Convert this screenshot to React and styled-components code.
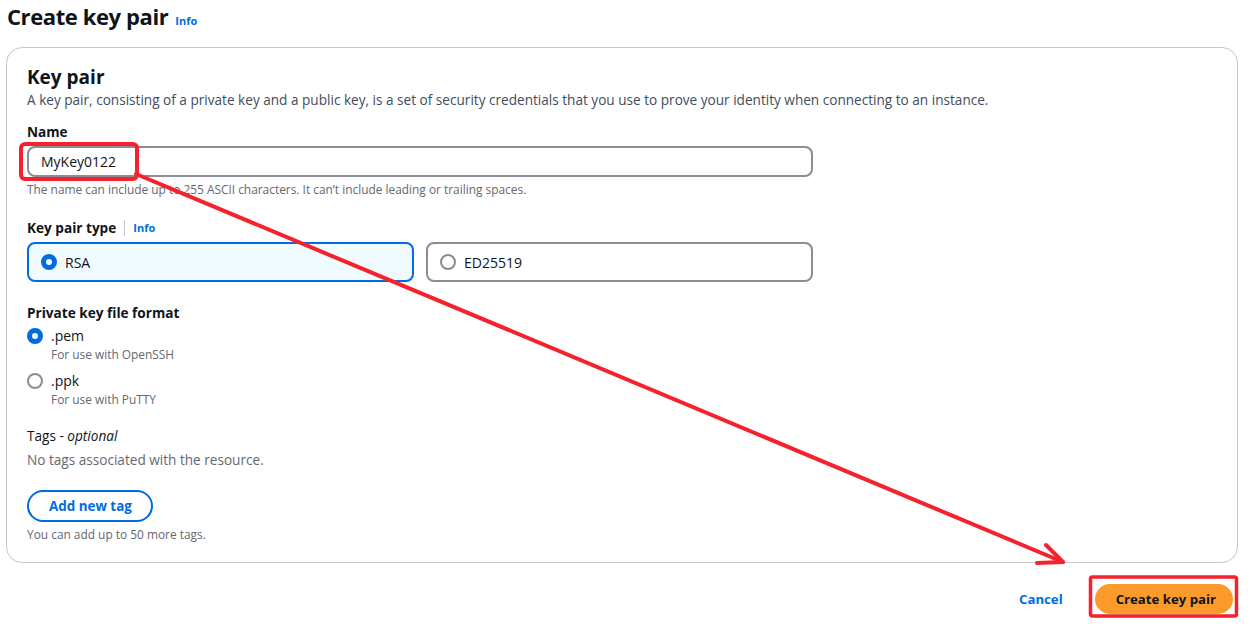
import React from 'react';
import styled, { createGlobalStyle } from 'styled-components';

const colors = {
    text: '#0f141a',
    muted: '#656871',
    blue: '#006ce0',
    border: '#c6c6cd',
    input: '#8c8c94',
    orange: '#fd9a2c',
    red: '#f5222d',
};

const GlobalStyle = createGlobalStyle`
    body {
        margin: 0;
        background: #ffffff;
        font-family: "Open Sans", "Noto Sans", sans-serif;
        color: ${colors.text};
    }
`;

const Page = styled.div`
    position: relative;
    width: 1251px;
    height: 624px;
    padding: 0 13px 0 6px;
    box-sizing: border-box;
    overflow: hidden;
`;

const Header = styled.div`
    display: flex;
    align-items: baseline;
    gap: 7px;
    height: 47px;
    padding-left: 1px;
`;

const Title = styled.h1`
    margin: 0;
    font-size: 22px;
    line-height: 33px;
    font-weight: 700;
    letter-spacing: -0.4px;
`;

const InfoLink = styled.span`
    color: ${colors.blue};
    font-size: 11px;
    font-weight: 700;
`;

const Container = styled.div`
    border: 1px solid ${colors.border};
    border-radius: 16px;
    padding: 16px 20px 18px;
    height: 516px;
    box-sizing: border-box;
`;

const SectionTitle = styled.h2`
    margin: 0;
    font-size: 19px;
    line-height: 26px;
    font-weight: 700;
`;

const Description = styled.p`
    margin: 0;
    font-size: 13.6px;
    line-height: 20px;
    color: #414d5c;
`;

const Field = styled.div`
    display: flex;
    flex-direction: column;
    margin-top: ${p => p.$top || 0}px;
`;

const Label = styled.div`
    display: flex;
    align-items: center;
    gap: 8px;
    font-size: 13.6px;
    line-height: 20px;
    font-weight: ${p => (p.$plain ? 400 : 700)};
    margin-bottom: 4px;

    em {
        font-style: italic;
    }
`;

const Divider = styled.span`
    width: 1px;
    height: 16px;
    background: ${colors.border};
`;

const TextInput = styled.div`
    width: 786px;
    height: 31px;
    box-sizing: border-box;
    border: 2px solid ${colors.input};
    border-radius: 8px;
    padding: 0 12px;
    display: flex;
    align-items: center;
    font-size: 14px;
`;

const Hint = styled.div`
    font-size: 11.9px;
    line-height: 16px;
    color: ${colors.muted};
    margin-top: ${p => p.$top || 4}px;
`;

const Tiles = styled.div`
    display: flex;
    gap: 12px;
`;

const Tile = styled.div`
    width: 387px;
    height: 40px;
    box-sizing: border-box;
    border: 2px solid ${p => (p.$active ? colors.blue : colors.input)};
    background: ${p => (p.$active ? '#f0fbff' : '#ffffff')};
    border-radius: 8px;
    padding: 0 12px;
    display: flex;
    align-items: center;
    gap: 8px;
    font-size: 14px;
`;

const Radio = styled.span`
    width: 16px;
    height: 16px;
    box-sizing: border-box;
    border-radius: 50%;
    flex-shrink: 0;
    border: ${p => (p.$checked ? `5px solid ${colors.blue}` : `2px solid ${colors.input}`)};
    background: #ffffff;
`;

const Option = styled.div`
    display: grid;
    grid-template-columns: 16px 1fr;
    column-gap: 8px;
    align-items: center;
    margin-top: ${p => p.$top || 0}px;
`;

const OptionLabel = styled.span`
    font-size: 14px;
    line-height: 20px;
`;

const OptionHint = styled.span`
    grid-column: 2;
    font-size: 11.9px;
    line-height: 16px;
    color: ${colors.muted};
`;

const Muted = styled.div`
    font-size: 13.6px;
    line-height: 20px;
    color: ${colors.muted};
`;

const OutlineButton = styled.button`
    align-self: flex-start;
    margin-top: 20px;
    height: 32px;
    padding: 0 19px 0 20px;
    border: 2px solid ${colors.blue};
    border-radius: 16px;
    background: #ffffff;
    color: ${colors.blue};
    font-family: inherit;
    font-size: 13.4px;
    font-weight: 700;
`;

const Footer = styled.div`
    display: flex;
    justify-content: flex-end;
    align-items: center;
    gap: 32px;
    padding: 21px 5px 0 0;
`;

const LinkButton = styled.span`
    color: ${colors.blue};
    font-size: 13.2px;
    font-weight: 700;
`;

const PrimaryButton = styled.button`
    height: 30px;
    padding: 0 17px 0 21px;
    border: none;
    border-radius: 16px;
    background: ${colors.orange};
    color: ${colors.text};
    font-family: inherit;
    font-size: 13.2px;
    font-weight: 700;
`;

const Annotations = styled.svg`
    position: absolute;
    left: 0;
    top: 0;
    pointer-events: none;
`;

const App = () => {
    return (
        <Page>
            <GlobalStyle />
            <Header>
                <Title>Create key pair</Title>
                <InfoLink>Info</InfoLink>
            </Header>
            <Container>
                <SectionTitle>Key pair</SectionTitle>
                <Description>
                    A key pair, consisting of a private key and a public key, is a set of security credentials that you use to prove your identity when connecting to an instance.
                </Description>

                <Field $top={12}>
                    <Label>Name</Label>
                    <TextInput>MyKey0122</TextInput>
                    <Hint>The name can include up to 255 ASCII characters. It can’t include leading or trailing spaces.</Hint>
                </Field>

                <Field $top={21}>
                    <Label>
                        Key pair type <Divider /> <InfoLink>Info</InfoLink>
                    </Label>
                    <Tiles>
                        <Tile $active>
                            <Radio $checked />
                            RSA
                        </Tile>
                        <Tile>
                            <Radio />
                            ED25519
                        </Tile>
                    </Tiles>
                </Field>

                <Field $top={21}>
                    <Label>Private key file format</Label>
                    <Option $top={-1}>
                        <Radio $checked />
                        <OptionLabel>.pem</OptionLabel>
                        <OptionHint>For use with OpenSSH</OptionHint>
                    </Option>
                    <Option $top={9}>
                        <Radio />
                        <OptionLabel>.ppk</OptionLabel>
                        <OptionHint>For use with PuTTY</OptionHint>
                    </Option>
                </Field>

                <Field $top={19}>
                    <Label $plain>
                        <span>Tags - <em>optional</em></span>
                    </Label>
                    <Muted>No tags associated with the resource.</Muted>
                    <OutlineButton>Add new tag</OutlineButton>
                    <Hint $top={4}>You can add up to 50 more tags.</Hint>
                </Field>
            </Container>
            <Footer>
                <LinkButton>Cancel</LinkButton>
                <PrimaryButton>Create key pair</PrimaryButton>
            </Footer>

            <Annotations width="1251" height="624" viewBox="0 0 1251 624">
                <rect x="21" y="144" width="116" height="35" rx="4" fill="none" stroke={colors.red} strokeWidth="4" />
                <rect x="1090.5" y="577" width="146" height="39" rx="2" fill="none" stroke={colors.red} strokeWidth="3.5" />
                <line x1="136" y1="174" x2="1063" y2="562" stroke={colors.red} strokeWidth="4" strokeLinecap="round" />
                <polyline points="1046,545 1063,562 1037,563" fill="none" stroke={colors.red} strokeWidth="4" strokeLinecap="round" strokeLinejoin="round" />
            </Annotations>
        </Page>
    );
};

export default App;
